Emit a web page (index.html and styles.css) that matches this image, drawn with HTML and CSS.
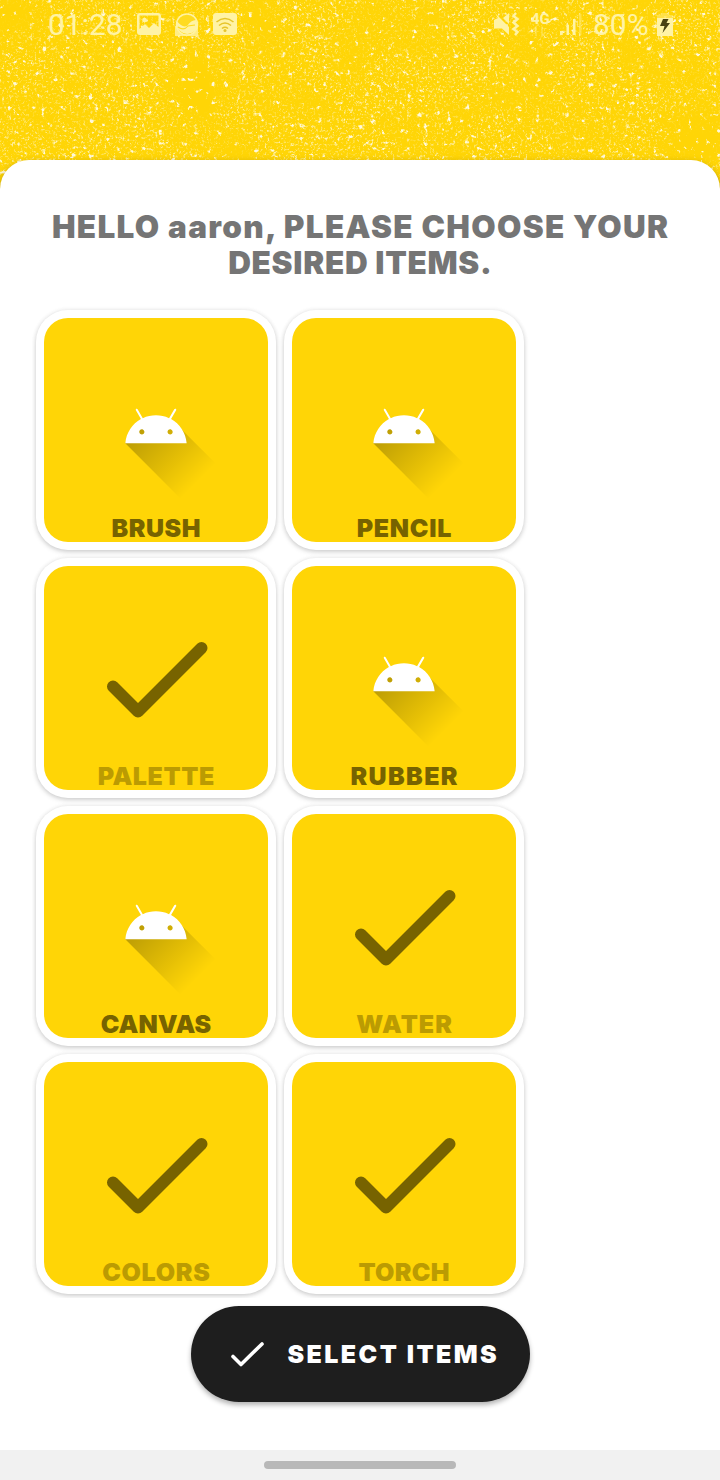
FILE: index.html
```html
<!DOCTYPE html>
<html lang="en">
<head>
<meta charset="utf-8">
<title>Choose items</title>
<link rel="stylesheet" href="styles.css">
</head>
<body>
<svg class="defs" width="0" height="0" aria-hidden="true">
  <defs>
    <linearGradient id="fade" gradientUnits="userSpaceOnUse" x1="42.95" y1="49.6" x2="85.85" y2="92.5">
      <stop offset="0" stop-color="#000" stop-opacity=".27"/><stop offset="1" stop-color="#000" stop-opacity="0"/>
    </linearGradient>
    <symbol id="robot" viewBox="0 0 108 108">
      <path fill="url(#fade)" d="M31 63.928s6.4-11 12.1-13.1c7.2-2.6 26-1.4 26-1.4l38.1 38.1-.2 21.4-32-1z"/>
      <path fill="#fff" d="M65.3 45.828l3.8-6.6c.2-.4.1-.9-.3-1.1-.4-.2-.9-.1-1.1.3l-3.9 6.7c-6.3-2.8-13.4-2.8-19.7 0l-3.9-6.7c-.2-.4-.7-.5-1.1-.3-.3.2-.4.7-.2 1.1l3.8 6.6C36.2 49.428 31.7 56.028 31 63.928h46c-.7-7.9-5.2-14.5-11.7-18.1zM43.4 57.328c-.8 0-1.5-.5-1.8-1.2-.3-.7-.1-1.5.4-2.1.5-.5 1.4-.7 2.1-.4.7.3 1.2 1 1.2 1.8 0 1.1-.8 1.9-1.9 1.9zM64.6 57.328c-.8 0-1.5-.5-1.8-1.2-.3-.7-.1-1.5.4-2.1.5-.5 1.4-.7 2.1-.4.7.3 1.2 1 1.2 1.8 0 1.1-.8 1.9-1.9 1.9z"/>
    </symbol>
    <symbol id="check" viewBox="0 0 144 144">
      <path d="M29 80.500l25 25L117.500 42" fill="none" stroke="#776300" stroke-width="12" stroke-linecap="round" stroke-linejoin="round"/>
    </symbol>
  </defs>
</svg>
<main class="screen">
  <svg class="texture" width="720" height="200" aria-hidden="true">
    <filter id="grain" x="0" y="0" width="100%" height="100%" color-interpolation-filters="sRGB">
      <feTurbulence type="fractalNoise" baseFrequency=".43" numOctaves="2" seed="4"/>
      <feColorMatrix values="0 0 0 0 1  0 0 0 0 1  0 0 0 0 1  3.600 0 0 0 -1.950" result="dots"/>
      <feTurbulence type="fractalNoise" baseFrequency=".018" numOctaves="3" seed="9"/>
      <feColorMatrix values="0 0 0 0 1  0 0 0 0 1  0 0 0 0 1  2.500 0 0 0 -.55" result="patches"/>
      <feComposite in="dots" in2="patches" operator="in"/>
    </filter>
    <filter id="flecks" x="0" y="0" width="100%" height="100%" color-interpolation-filters="sRGB">
      <feTurbulence type="fractalNoise" baseFrequency=".17" numOctaves="3" seed="23"/>
      <feColorMatrix values="0 0 0 0 1  0 0 0 0 1  0 0 0 0 1  7 0 0 0 -4.650"/>
    </filter>
    <rect width="720" height="200" filter="url(#grain)" opacity=".65"/>
    <rect width="720" height="200" filter="url(#flecks)" opacity=".85"/>
  </svg>
  <header class="status">
    <span class="clock">01:28</span>
    <svg class="notices" width="102" height="26" viewBox="0 0 102 26">
      <path fill-rule="evenodd" d="M3 1h18q3 0 3 3v16q0 3-3 3H3q-3 0-3-3V4q0-3 3-3zM2.500 3.500V17l5.500-5 4 4 5-5 4.500 4V3.500z"/>
      <circle cx="7.500" cy="8" r="2.300"/>
      <path d="M38 14v10h23V14z" opacity=".8"/>
      <circle cx="50" cy="12.500" r="10.500" fill="#ffdb20" stroke="#fff3a5" stroke-width="1.500"/>
      <path d="M40 9q5 7 10 5 4-6 9-6 4 6-1 11-8 6-15 0-4-4-3-10z"/>
      <path d="M41 15q6 4 10-1l7-1" fill="none" stroke="#ffdb20" stroke-width="1.200"/>
      <rect x="76" y="1" width="24" height="22" rx="3"/>
      <path d="M79.500 10q8.500-7 17 0M82 13.500q6-5 12 0M85 16.500q3-2.500 6 0" fill="none" stroke="#e7c52a" stroke-width="1.600"/>
      <circle cx="88" cy="18.500" r="1.500" fill="#e7c52a"/>
    </svg>
    <svg class="signals" width="92" height="28" viewBox="0 0 92 28">
      <path d="M2 1l14 14v8l-7-6.500H1V8l4-2zM10 6l6-5v11z"/>
      <path d="M23 1l-2.500 3 4 3-4 3.500 4 3.500-4 3 4 3-2.500 3" fill="none" stroke="#fff3a5" stroke-width="2.500"/>
      <text x="38" y="11.500" class="network">4G</text>
      <path d="M43 24v-9l-3 3M49 15v9l3-3" fill="none" stroke="#fff3a5" stroke-width="1.500" opacity=".4"/>
      <path d="M67 19h2.500v4H67zM73.500 13H76v10h-2.500zM80 7h2.500v16H80z"/>
      <path d="M86 2h2.500v21H86z" opacity=".4"/>
    </svg>
    <span class="percent">80%</span>
    <svg class="battery" width="16" height="24" viewBox="0 0 16 24">
      <path d="M4 0h8v2h4v4H0V2h4z" opacity=".4"/>
      <path d="M0 5h16v18H0z"/>
      <path d="M6 6h5.500l-2 4H13L5.500 20l2-7H3z" fill="#4a4210"/>
    </svg>
  </header>
  <section class="sheet">
    <h1 class="title"><span class="line1">HELLO aaron, PLEASE CHOOSE YOUR</span><br><span class="line2">DESIRED ITEMS.</span></h1>
    <div class="items">
      <article class="card"><div class="tile"><svg class="art"><use href="#robot"/></svg><span class="label brush">BRUSH</span></div></article>
      <article class="card"><div class="tile"><svg class="art"><use href="#robot"/></svg><span class="label pencil">PENCIL</span></div></article>
      <article class="card"><div class="tile"><svg class="art"><use href="#check"/></svg><span class="label palette chosen">PALETTE</span></div></article>
      <article class="card"><div class="tile"><svg class="art"><use href="#robot"/></svg><span class="label rubber">RUBBER</span></div></article>
      <article class="card"><div class="tile"><svg class="art"><use href="#robot"/></svg><span class="label canvas">CANVAS</span></div></article>
      <article class="card"><div class="tile"><svg class="art"><use href="#check"/></svg><span class="label water chosen">WATER</span></div></article>
      <article class="card"><div class="tile"><svg class="art"><use href="#check"/></svg><span class="label colors chosen">COLORS</span></div></article>
      <article class="card"><div class="tile"><svg class="art"><use href="#check"/></svg><span class="label torch chosen">TORCH</span></div></article>
    </div>
    <button class="submit">
      <svg width="36" height="28" viewBox="0 0 36 28"><path d="M4 16.500l8 8L33 4" fill="none" stroke="#fff" stroke-width="3.600" stroke-linecap="round" stroke-linejoin="round"/></svg>
      <span>SELECT ITEMS</span>
    </button>
  </section>
  <footer class="nav"><div class="handle"></div></footer>
</main>
</body>
</html>
```
FILE: styles.css
```css
* { box-sizing: border-box; }
body { margin: 0; font-family: Inter, "Open Sans", sans-serif; }
.defs { position: absolute; }
.screen { position: relative; width: 720px; height: 1480px; overflow: hidden; display: flex; flex-direction: column; background: #ffd506; }
.texture { position: absolute; top: 0; left: 0; }
.status { position: relative; height: 160px; padding: 0 46px 0 48px; display: flex; align-items: flex-start; fill: #fff3a5; color: #fff3a5; font: 400 30px/36px Roboto, sans-serif; }
.clock { width: 89px; padding-top: 7px; white-space: nowrap; }
.notices { margin-top: 12px; }
.signals { margin: 12px 0 0 254px; overflow: visible; }
.network { font: 700 15px Roboto, sans-serif; }
.percent { width: 64px; margin-left: 8px; padding-top: 7px; white-space: nowrap; }
.battery { margin-top: 13px; }
.sheet { position: relative; height: 1290px; padding: 49px 32px 0; border-radius: 29px 29px 0 0; background: #fff; box-shadow: 0 4px 8px rgba(0, 0, 0, .35); display: flex; flex-direction: column; align-items: center; }
.title { margin: 0; height: 93px; color: #757575; font-size: 31.500px; font-weight: 900; line-height: 36px; text-align: center; white-space: nowrap; }
.line1 { letter-spacing: 1.300px; margin-right: -1.300px; }
.line2 { letter-spacing: .700px; margin-right: -.700px; }
.items { width: 656px; height: 996px; padding: 8px 4px; overflow: hidden; display: grid; grid-template-columns: 240px 240px; grid-auto-rows: 240px; gap: 8px; }
.card { padding: 8px; border-radius: 32px; background: #fff; box-shadow: 0 2px 5px rgba(0, 0, 0, .17), 0 0 5px rgba(0, 0, 0, .07); }
.tile { height: 224px; border-radius: 24px; background: #ffd506; display: flex; flex-direction: column; align-items: center; padding-top: 40px; }
.art { width: 144px; height: 144px; flex: none; }
.label { height: 28px; margin-top: 12px; color: #776300; font-size: 25px; font-weight: 900; line-height: 28px; white-space: nowrap; }
.chosen { color: #bb9b02; }
.brush { letter-spacing: .500px; margin-right: -.500px; }
.pencil, .colors { letter-spacing: .700px; margin-right: -.700px; }
.palette { letter-spacing: .600px; margin-right: -.600px; }
.rubber { letter-spacing: 1.400px; margin-right: -1.400px; }
.canvas { letter-spacing: 0; }
.water { letter-spacing: 1px; margin-right: -1px; }
.torch { letter-spacing: .300px; margin-right: -.300px; }
.submit { width: 339px; height: 96px; margin-top: 8px; padding: 0 0 0 38px; border: 0; border-radius: 48px; background: #1e1e1e; color: #fff; display: flex; align-items: center; gap: 23px; font: 900 25px/30px Inter, sans-serif; letter-spacing: 2.420px; white-space: nowrap; box-shadow: 0 3px 5px rgba(0, 0, 0, .3); }
.nav { position: relative; height: 30px; padding-top: 11px; background: #f1f1f1; }
.handle { width: 192px; height: 8px; margin: 0 auto; border-radius: 4px; background: #b8b8b8; }
```
